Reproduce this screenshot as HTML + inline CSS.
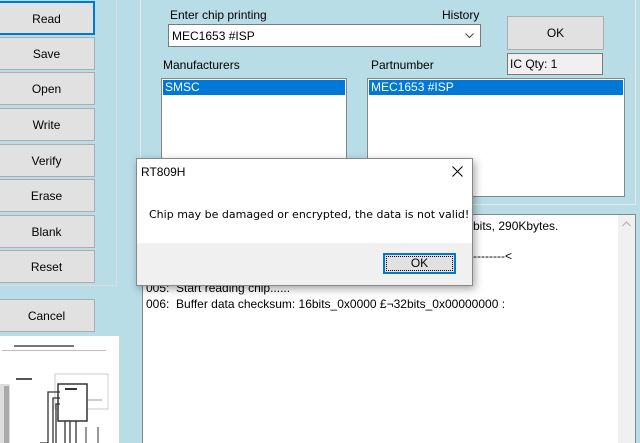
<!DOCTYPE html>
<html><head><style>
*{margin:0;padding:0;box-sizing:border-box}
html,body{width:640px;height:443px;overflow:hidden}
body{background:#b9dde7;position:relative;font-family:"Liberation Sans",sans-serif;font-size:12px;color:#000}
.a{position:absolute}
.btn{position:absolute;left:-2px;width:97px;height:33px;background:#e1e1e1;border:1px solid #adadad;text-align:center;line-height:33px;font-size:12px}
.lbl{position:absolute;font-size:12px}
.lb{position:absolute;background:#fff;border:1px solid #828790}
.sel{background:#0078d7;color:#fff;height:15px;line-height:15px;padding-left:2px;margin:1px}
</style></head><body>
<div class="btn" style="top:1px;height:34px;border:2px solid #0078d7;line-height:32px">Read</div>
<div class="btn" style="top:37px">Save</div>
<div class="btn" style="top:72px">Open</div>
<div class="btn" style="top:108px">Write</div>
<div class="btn" style="top:144px">Verify</div>
<div class="btn" style="top:179px">Erase</div>
<div class="btn" style="top:215px">Blank</div>
<div class="btn" style="top:250px">Reset</div>
<div class="a" style="left:116px;top:0;width:1px;height:286px;background:#dcdcdc"></div>
<div class="a" style="left:0;top:285px;width:117px;height:1px;background:#dcdcdc"></div>
<div class="btn" style="top:299px">Cancel</div>
<div class="a" style="left:0;top:336px;width:119px;height:107px;background:#fff">
<svg width="119" height="107" viewBox="0 0 119 107">
<rect x="14" y="9" width="60" height="2" fill="#777"/><rect x="2" y="14" width="104" height="1" fill="#bbb"/>
<rect x="16" y="42" width="16" height="2" fill="#555"/>
<rect x="0" y="48" width="10" height="59" fill="#ddd"/><rect x="4" y="50" width="5" height="57" fill="#aaa"/>
<rect x="55" y="38" width="53" height="35" fill="none" stroke="#ccc"/>
<rect x="58" y="48" width="29" height="37" fill="#fff" stroke="#333" stroke-width="1.5"/>
<rect x="65" y="52" width="12" height="2" fill="#333"/>
<path d="M48 107V56h12M53 107V62h7M56 107V68h4M65 107V85M70 107V85M76 107V85M40 107h8" fill="none" stroke="#333" stroke-width="1.3"/>
<rect x="88" y="63" width="14" height="2" fill="#ccc"/><rect x="85" y="91" width="2" height="16" fill="#999"/><rect x="97" y="91" width="2" height="16" fill="#999"/>
</svg></div>
<div class="a" style="left:140px;top:0;width:1px;height:205px;background:#e8e8e8"></div>
<div class="a" style="left:140px;top:204px;width:496px;height:1px;background:#e8e8e8"></div>
<div class="a" style="left:635px;top:0;width:1px;height:205px;background:#e8e8e8"></div>
<div class="lbl" style="left:170px;top:8px">Enter chip printing</div>
<div class="lbl" style="left:442px;top:8px">History</div>
<div class="a" style="left:168px;top:24px;width:313px;height:23px;background:#fff;border:1px solid #7a7a7a;padding:4px 0 0 3px">MEC1653 #ISP<svg class="a" style="right:6px;top:8px" width="9" height="6"><path d="M0.5 0.5L4.5 4.5L8.5 0.5" fill="none" stroke="#444"/></svg></div>
<div class="a" style="left:507px;top:16px;width:97px;height:34px;background:#e1e1e1;border:1px solid #adadad;text-align:center;line-height:32px">OK</div>
<div class="a" style="left:507px;top:53px;width:96px;height:22px;background:#f0f0f0;border:1px solid #7a7a7a;line-height:20px;padding-left:2px">IC Qty: 1</div>
<div class="lbl" style="left:163px;top:58px">Manufacturers</div>
<div class="lbl" style="left:371px;top:58px">Partnumber</div>
<div class="lb" style="left:161px;top:78px;width:186px;height:130px"><div class="sel">SMSC</div></div>
<div class="lb" style="left:367px;top:78px;width:258px;height:119px"><div class="sel">MEC1653 #ISP</div></div>
<div class="lb" style="left:142px;top:214px;width:494px;height:240px;border-color:#828790">
<div class="a" style="right:0;top:0;width:17px;height:240px;background:#f0f0f0"><svg class="a" style="left:4px;top:6px" width="9" height="6"><path d="M0.5 5L4.5 1L8.5 5" fill="none" stroke="#aaa"/></svg></div>
<div class="a" style="left:3px;top:66px">005:&nbsp; Start reading chip......</div>
<div class="a" style="left:330px;top:4px">bits, 290Kbytes.</div>
<div class="a" style="left:330px;top:34px">--------&lt;</div>
<div class="a" style="left:3px;top:82px">006:&nbsp; Buffer data checksum: 16bits_0x0000 £¬32bits_0x00000000 :</div>
</div>
<div class="a" style="left:136px;top:158px;width:337px;height:128px;background:#fff;border:1px solid #888;box-shadow:2px 3px 8px rgba(0,0,0,.35)">
<div class="a" style="left:4px;top:6px">RT809H</div>
<svg class="a" style="left:315px;top:7px" width="11" height="11"><path d="M0.5 0.5L10.5 10.5M10.5 0.5L0.5 10.5" stroke="#000" stroke-width="1"/></svg>
<div class="a" style="left:12px;top:49px;font-family:'DejaVu Sans',sans-serif;font-size:11px">Chip may be damaged or encrypted, the data is not valid!</div>
<div class="a" style="left:0;top:84px;width:335px;height:42px;background:#f0f0f0">
<div class="a" style="left:246px;top:10px;width:73px;height:21px;background:#e1e1e1;border:2px solid #0078d7;text-align:center;line-height:17px;outline:1px dotted #000;outline-offset:-4px">OK</div>
</div></div>
</body></html>
